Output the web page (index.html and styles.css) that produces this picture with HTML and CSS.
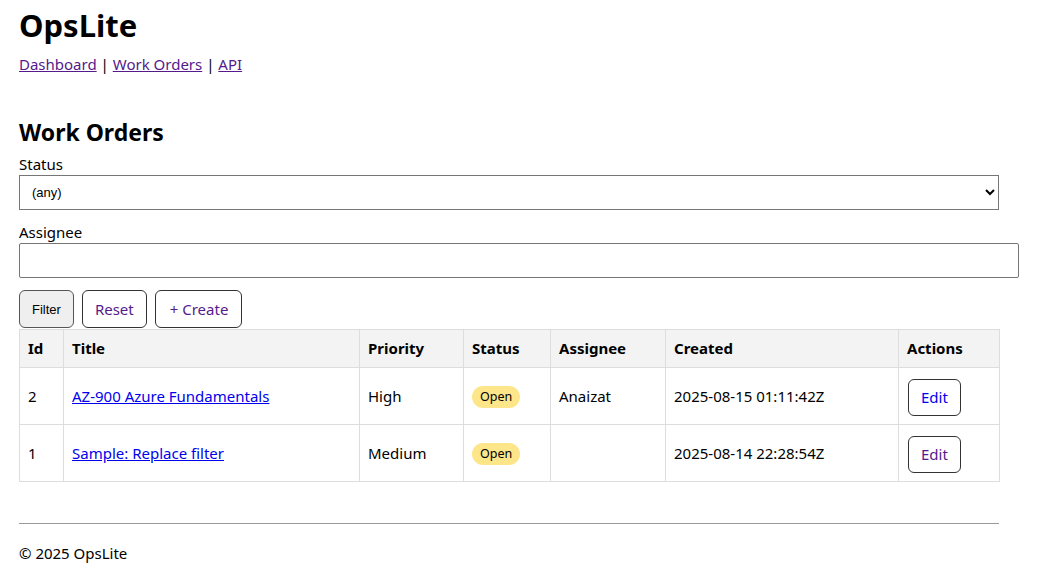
FILE: index.html
```html
<!DOCTYPE html>
<html lang="en">
<head>
<meta charset="utf-8">
<title>OpsLite - Work Orders</title>
<link rel="stylesheet" href="styles.css">
</head>
<body>
<header class="site-header">
  <h1 class="brand">OpsLite</h1>
  <nav class="nav">
    <a class="visited" href="#dashboard">Dashboard</a> | <a class="visited" href="#orders">Work Orders</a> | <a class="visited" href="#api">API</a>
  </nav>
</header>
<main class="main">
  <h2 class="page-title">Work Orders</h2>
  <form class="filters">
    <div class="field">
      <label class="field-label" for="status">Status</label>
      <select id="status" class="select">
        <option>(any)</option>
        <option>Open</option>
        <option>Closed</option>
      </select>
    </div>
    <div class="field">
      <label class="field-label" for="assignee">Assignee</label>
      <input id="assignee" class="text-input" type="text">
    </div>
    <div class="actions-row">
      <button type="button" class="btn-native">Filter</button>
      <a class="btn visited" href="#reset">Reset</a>
      <a class="btn btn-wide visited" href="#create">+ Create</a>
    </div>
  </form>
  <table class="grid">
    <colgroup>
      <col class="c-id"><col class="c-title"><col class="c-priority"><col class="c-status"><col class="c-assignee"><col class="c-created"><col class="c-actions">
    </colgroup>
    <thead>
      <tr><th>Id</th><th>Title</th><th>Priority</th><th>Status</th><th>Assignee</th><th>Created</th><th>Actions</th></tr>
    </thead>
    <tbody>
      <tr>
        <td>2</td>
        <td><a class="link" href="#2">AZ-900 Azure Fundamentals</a></td>
        <td>High</td>
        <td><span class="badge">Open</span></td>
        <td>Anaizat</td>
        <td>2025-08-15 01:11:42Z</td>
        <td class="act"><a class="btn link" href="#edit2">Edit</a></td>
      </tr>
      <tr>
        <td>1</td>
        <td><a class="link" href="#1">Sample: Replace filter</a></td>
        <td>Medium</td>
        <td><span class="badge">Open</span></td>
        <td></td>
        <td>2025-08-14 22:28:54Z</td>
        <td class="act"><a class="btn visited" href="#edit1">Edit</a></td>
      </tr>
    </tbody>
  </table>
</main>
<footer class="footer">
  <hr class="rule">
  <p class="copy">© 2025 OpsLite</p>
</footer>
</body>
</html>
```
FILE: styles.css
```css
html, body {
  background: #fff;
}
body {
  margin: 0;
  padding: 0 19px;
  font-family: "Noto Sans", "Open Sans", sans-serif;
  font-size: 15px;
  color: #000;
}
.site-header {
  max-width: 980px;
}
.brand {
  margin: 3px 0 6px;
  font-size: 31px;
  font-weight: 700;
  line-height: 44px;
}
.nav {
  line-height: 22px;
}
.visited { color: #551a8b; }
.link { color: #0000ee; }
.main {
  max-width: 980px;
}
.page-title {
  margin: 41px 0 5px;
  font-size: 23px;
  line-height: 33px;
  font-weight: 700;
}
.filters {
  display: flex;
  flex-direction: column;
}
.field {
  margin-bottom: 12px;
}
.field-label {
  display: block;
  line-height: 21px;
}
.select {
  display: block;
  width: 100%;
  height: 35px;
  box-sizing: border-box;
  border: 1px solid #767676;
  border-radius: 0;
  background: #fff;
  padding: 0 8px;
  font-family: "Liberation Sans", Arial, sans-serif;
  font-size: 13px;
  color: #000;
}
.text-input {
  display: block;
  width: 100%;
  box-sizing: content-box;
  padding: 0 9px;
  height: 33px;
  border: 1px solid #767676;
  border-radius: 2px;
  font-size: 15px;
}
.actions-row {
  display: flex;
  gap: 8px;
  margin-top: 0;
  height: 38px;
}
.btn-native {
  font-family: "Liberation Sans", Arial, sans-serif;
  font-size: 13px;
  padding: 0 12px;
  background: #efefef;
  border: 1px solid #555;
  border-radius: 6px;
  color: #000;
}
.btn {
  display: inline-flex;
  align-items: center;
  box-sizing: border-box;
  padding: 0 12px;
  border: 1px solid #333;
  border-radius: 6px;
  text-decoration: none;
  background: #fff;
}
.btn-wide {
  padding: 0 13px 0 14px;
}
.actions-row .btn {
  height: 38px;
}
.grid {
  width: 980px;
  border-collapse: collapse;
  table-layout: fixed;
  margin-top: 1px;
}
.c-id { width: 44px; }
.c-title { width: 296px; }
.c-priority { width: 104px; }
.c-status { width: 87px; }
.c-assignee { width: 115px; }
.c-created { width: 233px; }
.c-actions { width: 101px; }
.grid th, .grid td {
  border: 1px solid #ddd;
  padding: 8px;
  text-align: left;
  line-height: 21px;
}
.grid th {
  background: #f3f3f3;
  font-weight: 700;
}
.grid td {
  height: 40px;
}
.act .btn {
  height: 37px;
  margin: 2px 0 0 1px;
}
.badge {
  display: inline-block;
  padding: 0 8px;
  line-height: 22px;
  border-radius: 11px;
  background: #fde68a;
  font-size: 12.5px;
}
.footer {
  max-width: 980px;
}
.rule {
  margin: 41px 0 0;
  border: 0;
  border-top: 1px solid #999;
  height: 0;
}
.copy {
  margin: 18px 0;
  font-size: 15px;
  line-height: 22px;
}
```
